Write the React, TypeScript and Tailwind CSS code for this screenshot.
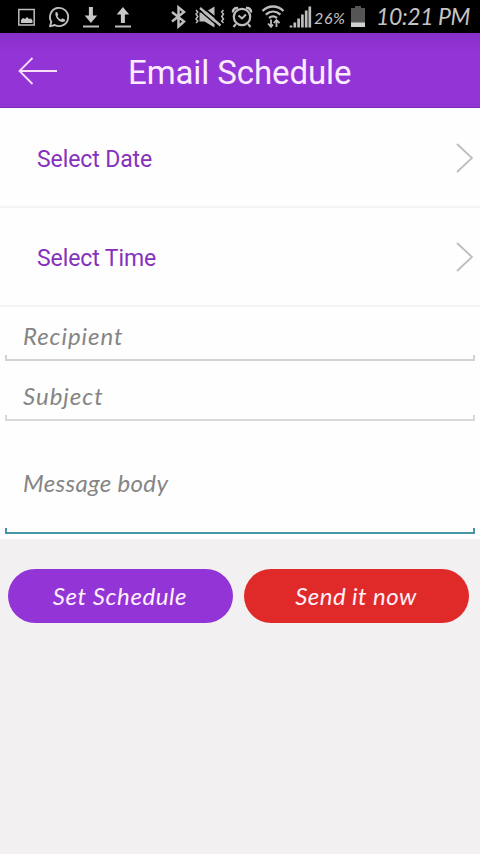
import type { ReactNode } from "react";

const hand = "font-['Lato','Open_Sans',sans-serif] italic";

function StatusIcon({ x, w, children }: { x: number; w: number; children: ReactNode }) {
  return (
    <svg width={w} height={33} viewBox={`${x} 0 ${w} 33`} className="shrink-0" fill="none" stroke="#bdbdbd" strokeWidth={2}>
      {children}
    </svg>
  );
}

function StatusBar() {
  return (
    <div className="flex h-[33px] shrink-0 items-center overflow-hidden bg-black pl-4 text-[#c4c4c4]">
      <StatusIcon x={16} w={28}>
        <rect x="18.8" y="9.5" width="15.4" height="15.5" strokeWidth="1.5" />
        <path d="M21 23v-3l2-2 2 1 2-2 2 2 2-.5 1.5 2V23z" fill="#c8c8c8" stroke="none" />
      </StatusIcon>
      <StatusIcon x={44} w={32}>
        <path d="M50 26.3l1.3-4.6a9.1 9.1 0 1 1 3.5 3.3z" strokeWidth="1.9" strokeLinejoin="round" />
        <path d="M55.6 12.2c.6-.5 1.4-.4 1.7.3l.9 2c.2.6-.9 1.4-.8 1.8.8 1.5 2 2.6 3.6 3.2.5.1 1.2-1.4 1.8-1.1l2 1c.7.4.3 1.7-.4 2.2-3.8 2.3-10.4-4.5-8.8-9.4z" fill="#c4c4c4" stroke="none" />
      </StatusIcon>
      <StatusIcon x={76} w={32}>
        <path d="M88.9 7h4v8.5h4.3L90.9 23l-6.2-7.5h4.2z" fill="#c8c8c8" stroke="none" />
        <path d="M83 26.5h16" />
      </StatusIcon>
      <StatusIcon x={108} w={58}>
        <path d="M120.9 23h4v-8.500h4.3L122.9 7l-6.2 7.500h4.2z" fill="#c8c8c8" stroke="none" />
        <path d="M115 26.5h16" />
      </StatusIcon>
      <StatusIcon x={166} w={26}>
        <path d="M172 12l12 9.500-5.500 5V7.500l5.500 4.500-12 9.500" strokeWidth="2.5" />
      </StatusIcon>
      <StatusIcon x={192} w={36}>
        <path d="M199.500 12.500h5l10-6v21l-10-6h-5z" fill="#bdbdbd" stroke="none" />
        <path d="M201 6l21 17" stroke="#000" strokeWidth="2" />
        <path d="M200 8l20.500 17.500" strokeWidth="2.4" />
        <path d="M199 10l21 18" stroke="#000" strokeWidth="1.2" />
        <path d="M196 10l1.800 2-1.800 2 1.800 2.500-1.800 2.500 1.800 2-1.800 2M223.500 10l-1.800 2 1.800 2-1.800 2.500 1.800 2.500-1.800 2 1.800 2" strokeWidth="1.5" />
      </StatusIcon>
      <StatusIcon x={228} w={30}>
        <circle cx="242" cy="17" r="8.200" strokeWidth="2.2" />
        <path d="M238.500 15.500l3.500 3 4-4M236 24l-2.500 3M248 24l2.500 3" />
        <path d="M233 12.500c-.5-3 2-5 5-4.500M251 12.500c.5-3-2-5-5-4.500" strokeWidth="2.5" />
      </StatusIcon>
      <StatusIcon x={258} w={29}>
        <path d="M262.500 11c6-6 15-6 21 0M265.800 14.700c4.500-4 10.200-4 14.600 0M269 18c2.500-2.100 5.500-2.100 8 0" strokeWidth="2.3" />
        <path d="M271 19.500v7M268 23.500l3 3.300 2-2.300M276.500 27v-6.500M273.800 23l2.700-3 3 3" strokeWidth="1.8" />
      </StatusIcon>
      <StatusIcon x={287} w={27}>
        <path d="M291 27.500v-2M294.800 27.500v-5M298.600 27.500v-9M302.400 27.500v-13M306.200 27.500v-17M309.800 27.500v-21" strokeWidth="2.7" />
      </StatusIcon>
      <span className={`${hand} w-[37px] shrink-0 whitespace-nowrap pt-[3px] text-[16px] leading-none tracking-[0.6px]`}>26%</span>
      <StatusIcon x={351} w={25}>
        <path d="M355 6h6v2h4v19h-14V8h4z" fill="#555" stroke="none" />
        <path d="M351 22.500h14V27h-14z" fill="#d2d2d2" stroke="none" />
      </StatusIcon>
      <span className={`${hand} whitespace-nowrap text-[23px] leading-none tracking-[-0.4px]`}>10:21 PM</span>
    </div>
  );
}

function PickerRow({ label }: { label: string }) {
  return (
    <div className="flex h-[99px] items-center justify-between border-b-2 border-[#f4f4f4] pr-[7px] pl-[37px] font-['Roboto',sans-serif] text-[23px] tracking-[-0.1px] text-[#8531bd]">
      <span className="pt-[5px]">{label}</span>
      <svg width="17" height="30" viewBox="0 0 17 30" fill="none" stroke="#bdbdbd" strokeWidth="1.8">
        <path d="M1 1l15 14L1 29" />
      </svg>
    </div>
  );
}

function Field({ label, box, line, text }: { label: string; box: string; line: string; text: string }) {
  return (
    <div className={`mx-[5px] flex flex-col justify-end ${box}`}>
      <span className={`${hand} pl-[18px] text-[24px] leading-[30px] whitespace-nowrap text-[#858585] ${text}`}>{label}</span>
      <div className={`h-[6px] shrink-0 border-x-2 border-b-2 ${line}`} />
    </div>
  );
}

export default function App() {
  return (
    <div className="flex h-[854px] w-[480px] flex-col overflow-hidden bg-[#f2f0f1]">
      <StatusBar />
      <header className="flex h-[75px] shrink-0 items-center border-b border-[#7e2bb5] bg-linear-to-b from-[#8830c7] to-[#9334d6] to-25% pl-[18px]">
        <svg width="39" height="28" viewBox="0 0 39 28" fill="none" stroke="#f8dfff" strokeWidth="1.8" className="mt-[2px]">
          <path d="M14.5 1L1.5 14l13 13M1.5 14H39" />
        </svg>
        <h1 className="ml-[71px] pt-[4px] font-['Roboto',sans-serif] text-[33px] leading-none tracking-[-0.1px] whitespace-nowrap text-[#fcecff]">Email Schedule</h1>
      </header>
      <main className="h-[431px] shrink-0 bg-[#fefefe] pt-px">
        <PickerRow label="Select Date" />
        <PickerRow label="Select Time" />
        <Field label="Recipient" box="h-[54px]" line="border-[#d3d3d3]" text="mb-[4px] tracking-[0.95px]" />
        <Field label="Subject" box="h-[60px]" line="border-[#d8d8d8]" text="mb-[4px] tracking-[1px]" />
        <Field label="Message body" box="h-[113px]" line="border-[#4596a5]" text="mb-[30px] tracking-[0.35px]" />
      </main>
      <div className={`${hand} mt-[30px] flex gap-[11px] px-[7.5px] text-[24px] text-[#fff0fb]`}>
        <button className="h-[54px] w-[225px] rounded-full bg-[#9334d6] tracking-[0.6px] italic">Set Schedule</button>
        <button className="h-[54px] w-[225px] rounded-full bg-[#e02a2a] tracking-[0.45px] italic">Send it now</button>
      </div>
    </div>
  );
}
